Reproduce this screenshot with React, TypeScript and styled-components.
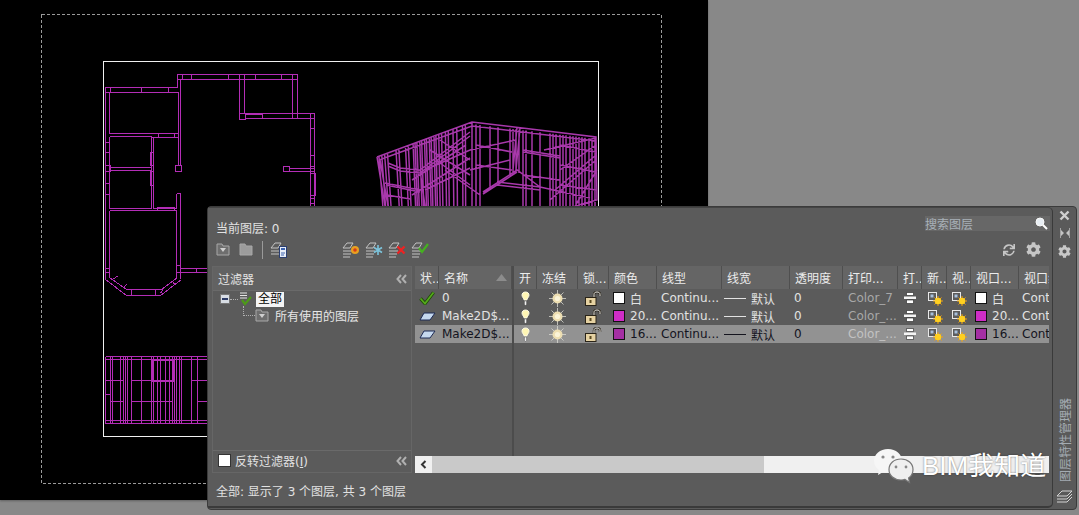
import React from "react";
import styled, { createGlobalStyle } from "styled-components";
import { FaCog, FaSync } from "react-icons/fa";

const GlobalStyle = createGlobalStyle`
  html, body {
    margin: 0;
    padding: 0;
    width: 1079px;
    height: 515px;
    overflow: hidden;
    background: #888888;
  }
  * {
    box-sizing: border-box;
  }
`;

const Desktop = styled.div`
  position: relative;
  width: 1079px;
  height: 515px;
  background: #888888;
  font-family: "DejaVu Sans", "Noto Sans CJK SC", sans-serif;
  font-size: 12px;
  color: #e2e2e2;
`;

const Viewport = styled.div`
  width: 708px;
  height: 500px;
  background: #000;
  box-shadow: 0 1px 2px rgba(0, 0, 0, 0.3);

  svg {
    display: block;
  }
`;

const Palette = styled.div`
  position: absolute;
  left: 207px;
  top: 206px;
  width: 870px;
  height: 304px;
  display: flex;
  background: #5a5a5a;
  border: 1px solid #3b3b3b;
  border-radius: 4px;
`;

const Main = styled.div`
  width: 845px;
  height: 301px;
  display: flex;
  flex-direction: column;
  padding: 0 2px 0 4px;
  background: #5b5b5b;
  border-top: 1px solid #444;
  border-right: 1px solid #3a3a3a;
  border-bottom: 2px solid #3a3a3a;
  border-radius: 0 5px 5px 0;
`;

const TitleRow = styled.div`
  height: 29px;
  display: flex;
  align-items: flex-end;
  justify-content: space-between;
  padding: 0 0 1px 4px;
`;

const SearchBox = styled.div`
  width: 125px;
  height: 15px;
  margin-bottom: 5px;
  display: flex;
  align-items: center;
  justify-content: space-between;
  background: #676767;
  color: #a9b1b8;
  padding-right: 2px;
`;

const ToolRow = styled.div`
  height: 29px;
  display: flex;
  align-items: center;
  padding: 0 0 4px 4px;
`;

const ToolGap = styled.div<{ $width: number }>`
  width: ${(p) => p.$width}px;
  flex: none;
`;

const ToolDivider = styled.div`
  width: 1px;
  height: 18px;
  background: #9a9a9a;
  margin: 0 7px 0 9px;
`;

const ToolRight = styled.div`
  margin-left: auto;
  margin-right: 9px;
  display: flex;
  align-items: center;
  gap: 11px;
  color: #c6c6c6;
`;

const Body = styled.div`
  height: 207px;
  display: flex;
  gap: 3px;
`;

const FilterPane = styled.div`
  width: 200px;
  display: flex;
  flex-direction: column;
  border: 1px solid #666;
`;

const FilterHeader = styled.div`
  height: 24px;
  flex: none;
  display: flex;
  align-items: center;
  justify-content: space-between;
  padding: 0 4px 0 5px;
  background: #626262;
  border-bottom: 1px solid #6a6a6a;
`;

const FilterTree = styled.div`
  flex: 1;
  padding: 0 0 0 7px;
`;

const TreeRow = styled.div<{ $indent?: number }>`
  height: 16px;
  display: flex;
  align-items: center;
  padding-left: ${(p) => p.$indent ?? 0}px;
`;

const TreeToggle = styled.div`
  width: 10px;
  height: 10px;
  background: #d8dde4;
  border: 1px solid #777;
  display: flex;
  align-items: center;
  justify-content: center;

  &::after {
    content: "";
    width: 6px;
    height: 2px;
    background: #2c3a66;
  }
`;

const TreeDots = styled.div`
  width: 8px;
  border-top: 1px dotted #b0b0b0;
`;

const TreeElbow = styled.div`
  width: 12px;
  height: 10px;
  margin-top: -8px;
  border-left: 1px dotted #b0b0b0;
  border-bottom: 1px dotted #b0b0b0;
`;

const TreeSelected = styled.span`
  background: #f4f4f4;
  color: #000;
  padding: 0 2px;
  line-height: 15px;
  margin-left: 3px;
`;

const TreeLabel = styled.span`
  margin-left: 6px;
  color: #e6e6e6;
`;

const FilterFooter = styled.div`
  height: 22px;
  flex: none;
  display: flex;
  align-items: center;
  justify-content: space-between;
  padding: 0 4px 2px 5px;
  border-top: 1px solid #6a6a6a;
`;

const InvertLabel = styled.label`
  display: flex;
  align-items: center;
  gap: 4px;

  u {
    text-underline-offset: 1px;
  }
`;

const CheckBox = styled.span`
  width: 13px;
  height: 13px;
  background: #fff;
  border: 1px solid #333;
`;

const LayerPane = styled.div`
  flex: 1;
  min-width: 0;
  position: relative;
  display: flex;
  flex-direction: column;
`;

const LayerTables = styled.div`
  height: 190px;
  display: flex;
  padding-right: 1px;
`;

const FrozenTable = styled.div`
  width: 99px;
  flex: none;
  border-right: 2px solid #4c4c4c;
`;

const ScrollTable = styled.div`
  flex: 1;
  min-width: 0;
  overflow: hidden;
`;

const HeaderRow = styled.div`
  height: 23px;
  display: flex;
  background: #656565;
  color: #ececec;
`;

const HeaderCell = styled.div<{ $width: number }>`
  width: ${(p) => p.$width}px;
  flex: none;
  display: flex;
  align-items: center;
  justify-content: space-between;
  padding: 0 4px 0 5px;
  overflow: hidden;
  white-space: nowrap;
  border-right: 1px solid #4f4f4f;
`;

const Row = styled.div<{ $selected?: boolean }>`
  height: 18px;
  display: flex;
  background: ${(p) => (p.$selected ? "#929292" : "transparent")};
  color: ${(p) => (p.$selected ? "#14141e" : "#e2e2e2")};
`;

const Cell = styled.div<{ $width: number; $center?: boolean; $tint?: string; $pad?: number }>`
  width: ${(p) => p.$width}px;
  flex: none;
  display: flex;
  align-items: center;
  justify-content: ${(p) => (p.$center ? "center" : "flex-start")};
  padding-left: ${(p) => (p.$center ? 0 : (p.$pad ?? 4))}px;
  overflow: hidden;
  white-space: nowrap;
  color: ${(p) => p.$tint ?? "inherit"};
`;

const Swatch = styled.span<{ $color: string }>`
  width: 12px;
  height: 12px;
  flex: none;
  background: ${(p) => p.$color};
  border: 1px solid #111;
  margin-right: 5px;
`;

const LineSample = styled.span`
  width: 22px;
  height: 1px;
  flex: none;
  background: currentColor;
  margin: 0 5px 0 -2px;
`;

const ScrollBar = styled.div`
  height: 17px;
  margin-right: 1px;
  display: flex;
  background: #f0f0f0;
`;

const ScrollArrow = styled.div`
  width: 17px;
  display: flex;
  align-items: center;
  justify-content: center;
  color: #333;
`;

const ScrollThumb = styled.div`
  width: 332px;
  background: #c9c9c9;
`;

const StatusRow = styled.div`
  flex: 1;
  display: flex;
  align-items: center;
  padding: 2px 0 0 4px;
`;

const SideStrip = styled.div`
  flex: 1;
  display: flex;
  flex-direction: column;
  align-items: center;
  padding: 3px 0 5px;
  color: #c8c8c8;
`;

const SideButtons = styled.div`
  display: flex;
  flex-direction: column;
  align-items: center;
  gap: 7px;
`;

const SideTitle = styled.div`
  margin-top: auto;
  margin-bottom: 8px;
  writing-mode: vertical-rl;
  text-orientation: sideways;
  transform: rotate(180deg);
  color: #a4abb2;
  font-family: "Noto Sans CJK SC", sans-serif;
  line-height: 14px;
`;

const Watermark = styled.div`
  position: absolute;
  left: 873px;
  top: 448px;
  display: flex;
  align-items: center;
  gap: 7px;
  color: #fff;
  font-family: "Liberation Sans", "Noto Sans CJK SC", sans-serif;
  font-size: 26px;
  line-height: 36px;
  text-shadow: 0 0 2px rgba(0, 0, 0, 0.55);
`;

const FolderIcon = ({ filled }: { filled?: boolean }) => (
  <svg width="14" height="13" viewBox="0 0 14 13">
    <path d="M1 3V1h5l1 2h6v9H1z" fill={filled ? "#9c9c9c" : "#6e6e6e"} stroke="#a8a8a8" />
    {!filled && <path d="M4 5h6L7 9z" fill="#d0d0d0" />}
  </svg>
);

const LayerStack = ({ badge }: { badge?: React.ReactNode }) => (
  <svg width="18" height="17" viewBox="0 0 18 17">
    <g fill="none" stroke="#c4c4c4">
      <path d="M1 7h7l3-5H5z" fill="#5b5b5b" />
      <path d="M1 10h9M1 13h8M1 16h7" />
    </g>
    {badge}
  </svg>
);

const OrangeDot = (
  <g>
    <circle cx="13" cy="9" r="4" fill="#e8a020" />
    <circle cx="13" cy="9" r="1.8" fill="#d83a18" />
  </g>
);
const BlueDot = (
  <path d="M13 4v10M9 6.5l8 5M9 11.5l8-5" stroke="#7cc4dc" strokeWidth="1.6" />
);
const RedCross = <path d="M9.5 5.5l7 7M16.5 5.5l-7 7" stroke="#ee2222" strokeWidth="2.4" />;
const GreenTick = <path d="M8 7l3 4 6-8" fill="none" stroke="#45b020" strokeWidth="2.2" />;

const StateIcon = () => (
  <svg width="17" height="17" viewBox="0 0 17 17">
    <g fill="none" stroke="#c4c4c4">
      <path d="M1 7h7l3-5H5z" />
      <path d="M1 10h8M1 13h8" />
    </g>
    <rect x="9.5" y="5.5" width="7" height="11" fill="#e8eef8" stroke="#2b3f70" />
    <rect x="11" y="7" width="4" height="2" fill="#3e64b0" />
    <path d="M11 12h4M11 14h3" stroke="#3e64b0" />
  </svg>
);

const DoubleChevron = () => (
  <svg width="11" height="10" viewBox="0 0 11 10">
    <path d="M5 1L1.5 5 5 9M10 1L6.5 5 10 9" fill="none" stroke="#b0b0b0" strokeWidth="2" />
  </svg>
);

const Magnifier = () => (
  <svg width="13" height="13" viewBox="0 0 13 13">
    <circle cx="5" cy="5" r="4" fill="#e8eef4" stroke="#f8f8f8" />
    <path d="M8 8l4 4" stroke="#fff" strokeWidth="2" />
  </svg>
);

const Tick = () => (
  <svg width="16" height="14" viewBox="0 0 16 14">
    <path d="M1.5 7.5L6 12.5 14.5 1.5" fill="none" stroke="#1e4a08" strokeWidth="3.4" />
    <path d="M1.5 7.5L6 12.5 14.5 1.5" fill="none" stroke="#55a81c" strokeWidth="1.8" />
  </svg>
);

const LayerPlate = () => (
  <svg width="17" height="9" viewBox="0 0 17 9">
    <path d="M1 8l4-7h11l-5 7z" fill="#c6d9ef" stroke="#1d2a55" />
  </svg>
);

const Bulb = () => (
  <svg width="9" height="15" viewBox="0 0 9 15">
    <path d="M4.5 1C2 1 1 2.6 1 4.2 1 6.2 3 7.4 3.2 9h2.6C6 7.4 8 6.2 8 4.2 8 2.6 7 1 4.5 1z" fill="#fff6b4" stroke="#fffde8" />
    <path d="M3.4 10h2.2v3.4l-1.1 1-1.1-1z" fill="#f2f2f2" stroke="#333" strokeWidth="0.4" />
  </svg>
);

const Sun = () => (
  <svg width="17" height="17" viewBox="0 0 17 17">
    <path d="M8.5 0v17M0 8.5h17M2.5 2.5l12 12M14.5 2.5l-12 12" stroke="#d8d8d0" strokeWidth="0.8" />
    <circle cx="8.5" cy="8.5" r="5" fill="#eedfb2" />
    <circle cx="8.5" cy="8.5" r="2.6" fill="#fbf4d8" />
  </svg>
);

const OpenLock = () => (
  <svg width="17" height="15" viewBox="0 0 17 15">
    <path d="M9 7V3.5C9 1.8 10.2 1 12 1s3 .8 3 2.5V5" fill="none" stroke="#2a2418" strokeWidth="2.4" />
    <path d="M9 7V3.5C9 1.8 10.2 1 12 1s3 .8 3 2.5V5" fill="none" stroke="#f2f2f2" strokeWidth="1" />
    <rect x="0.5" y="6.5" width="10.5" height="8" fill="#e6d2a2" stroke="#2a2418" />
    <rect x="4.5" y="9" width="2" height="3" fill="#5a4a20" />
  </svg>
);

const Printer = () => (
  <svg width="12" height="12" viewBox="0 0 12 12">
    <path d="M2.500 .5h7v3h-7z" fill="#fff" stroke="#222" strokeWidth="0.6" />
    <rect x="0" y="4.500" width="12" height="2.500" fill="#f4f4f4" />
    <path d="M2.500 8h7v3.500h-7z" fill="#fff" stroke="#222" strokeWidth="0.6" />
  </svg>
);

const NewFreeze = () => (
  <svg width="16" height="15" viewBox="0 0 16 15">
    <rect x="1.5" y="1.5" width="8" height="8" fill="#5b5b5b" stroke="#e8e8e8" />
    <rect x="3.5" y="3.5" width="3" height="3" fill="#a8c0dc" />
    <path d="M11 5v10M6 10h10M7.5 6.5l7 7M14.5 6.5l-7 7" stroke="#f0a010" />
    <circle cx="11" cy="10" r="3.2" fill="#ffd020" />
  </svg>
);

const CloseIcon = () => (
  <svg width="11" height="11" viewBox="0 0 11 11">
    <path d="M1.5 1.5l8 8M9.5 1.5l-8 8" stroke="#d0d0d0" strokeWidth="2.4" />
  </svg>
);

const PinIcon = () => (
  <svg width="10" height="10" viewBox="0 0 10 10">
    <path d="M0 0v10M10 0v10" stroke="#c4c4c4" strokeWidth="1.4" />
    <path d="M1 2l3 3-3 3zM9 2L6 5l3 3z" fill="#c4c4c4" />
  </svg>
);

const SheetsIcon = () => (
  <svg width="17" height="14" viewBox="0 0 17 14">
    <g fill="none" stroke="#d4d4d4">
      <path d="M1 6l5-5h10l-5 5z" />
      <path d="M1 9h10l5-5M1 12h10l5-5" />
    </g>
  </svg>
);

const WeChatLogo = () => (
  <svg width="42" height="36" viewBox="0 0 42 36">
    <path d="M15 1C7 1 1 6 1 13c0 4 2 7 5 9l-1 5 5-3c1.500.4 3 .6 5 .6 8 0 14-5 14-11.600S23 1 15 1z" fill="#f6f6f6" />
    <path d="M28 11c-7 0-12 4.500-12 10.500S21 32 28 32c1.500 0 2.800-.2 4-.6l4.500 3-.9-4.500C38.500 28 40 25 40 21.500 40 15.500 35 11 28 11z" fill="#efefef" stroke="#777" strokeWidth="1.2" />
    <circle cx="10" cy="9" r="1.600" fill="#888" />
    <circle cx="20" cy="9" r="1.600" fill="#888" />
    <circle cx="23" cy="19" r="1.400" fill="#888" />
    <circle cx="33" cy="19" r="1.400" fill="#888" />
  </svg>
);

// rectangle outline for the plan walls
const box = (x1: number, y1: number, x2: number, y2: number) =>
  `M${x1} ${y1}H${x2}V${y2}H${x1}Z`;
const h = (x1: number, x2: number, y: number) => `M${x1} ${y}H${x2}`;
const v = (x: number, y1: number, y2: number) => `M${x} ${y1}V${y2}`;

const planPath = [
  // upper left room
  h(105, 177, 87), h(105, 178, 92), v(177, 74, 87), v(105, 87, 278), v(109, 92, 133),
  v(141, 87, 92), v(168, 87, 92), box(105, 87, 110, 92),
  v(178, 92, 165), v(180, 79, 165), box(175, 165, 181, 171),
  h(109, 178, 133), h(109, 151, 136), box(158, 133, 174, 137), h(151, 178, 137),
  // middle rooms
  v(109, 136, 208), v(151, 136, 208), v(153, 137, 208), box(150, 152, 153, 165), box(150, 171, 153, 185),
  h(109, 151, 167), h(109, 151, 170), box(105, 165, 110, 171),
  h(105, 109, 142), h(105, 109, 152), h(105, 109, 183), h(105, 109, 194),
  h(109, 151, 208), h(109, 176, 210), h(153, 176, 208), box(157, 207, 174, 210),
  v(176, 193, 208), h(176, 180, 193), v(180, 193, 278), v(176, 210, 277),
  // bay window
  v(109, 210, 277), "M105 279L126 295H160L181 279", "M109 277L126 289H161L177 277",
  "M112 279L118 275M122 288L126 284", v(131, 289, 295), v(155, 289, 295),
  "M163 288L160 293M172 281L175 285",
  box(176, 265, 180, 272), h(180, 207, 268), h(180, 207, 272), v(196, 268, 272),
  h(105, 109, 268), h(105, 109, 272),
  // top and right wing
  h(177, 297, 74), h(177, 297, 79), box(177, 74, 182, 79),
  v(191, 74, 79), v(228, 74, 79), v(239, 74, 79), v(244, 74, 79), v(255, 74, 79), v(281, 74, 79),
  v(239, 79, 113), v(244, 79, 113), box(239, 113, 245, 119), box(245, 114, 262, 118),
  h(245, 314, 113), h(245, 314, 118), v(292, 74, 118), v(297, 74, 118),
  v(310, 113, 207), v(314, 113, 207), h(310, 314, 128), h(310, 314, 155), h(310, 314, 166),
  box(310, 173, 315, 195), h(310, 314, 198), h(310, 314, 203),
  box(283, 166, 289, 171), h(289, 314, 168), h(289, 314, 171),
  // lower elevation
  h(105, 207, 356), h(105, 207, 359), h(105, 207, 420), h(105, 207, 423),
  ...[105, 110, 112, 120, 123, 125, 127, 131, 141, 151, 153, 157, 160, 165, 169, 172, 174, 176, 179, 181, 191, 197].map(
    (x) => v(x, 356, 423)
  ),
  h(105, 123, 380), h(131, 172, 380), h(191, 207, 380), h(110, 123, 401), h(131, 172, 401), h(197, 207, 401),
  h(105, 110, 394), box(151, 359, 174, 381), box(152, 360, 173, 380),
].join("");

const lerp = (a: number, b: number, t: number) => a + (b - a) * t;

// verticals along the left wall of the 3D view
const leftWall = [0.02, 0.05, 0.08, 0.11, 0.2, 0.23, 0.3, 0.33, 0.38, 0.4, 0.42, 0.45, 0.47, 0.5, 0.52, 0.55, 0.57, 0.6, 0.62, 0.65, 0.68, 0.72, 0.75, 0.8, 0.84, 0.9, 0.93, 1]
  .map((t) => {
    const x = lerp(377, 472, t);
    const y = lerp(157, 122, t);
    return `M${x} ${y}L${x + 4 * (1 - t)} 206`;
  })
  .join("");

// verticals along the back wall, stopping at the floor opening
const floorEnd = (x: number) => (x > 486 && x < 522 ? 172 + Math.abs(x - 517) * 0.55 : 206);

const backWall = [476, 480, 490, 498, 510, 513, 516, 519, 523, 526, 532, 540, 550, 553, 556, 560, 563, 566, 570, 573, 576, 579, 582, 585, 589, 592, 595]
  .map((x) => `M${x} ${lerp(124, 139, (x - 472) / 124)}V${floorEnd(x)}`)
  .join("");

const modelPath = [
  leftWall,
  backWall,
  "M377 157L472 122L596 137L597 200L575 206",
  "M379 160L472 126L596 141",
  "M377 157L385 206M380 160L388 206",
  "M388 163L400 168L420 170L470 132",
  "M388 166L400 171L420 173L470 136",
  "M385 183L420 190M387 195L410 199M386 185L420 192",
  "M420 170L425 206M412 180L466 145M412 195L470 158M425 170L470 150M425 190L470 168",
  "M430 150L470 175M440 140L470 160M436 160L470 185M445 170L480 195",
  "M470 150L516 140M470 170L510 160M476 145L512 152M476 165L512 170",
  "M483 192L517 170L540 187M483 194L517 172M497 182L540 187L590 198M497 185L540 190",
  "M517 127L513 170M520 128L516 170M523 150L560 156M523 175L560 180M523 152L560 158",
  "M544 150L596 138M560 170L596 145M555 190L596 155M575 206L597 170",
  "M560 145L596 152M560 165L596 172M560 185L596 190M550 200L596 160",
].join("");

const DrawingSheet = () => (
  <svg width="708" height="500" viewBox="0 0 708 500">
    <g transform="translate(0.5 0.5)" fill="none" shapeRendering="crispEdges">
      <rect x="41" y="14" width="620" height="469" stroke="#9a9a9a" strokeDasharray="3 2" />
      <rect x="103" y="61" width="495" height="375" stroke="#f0f0f0" />
      <path d={planPath} stroke="#b32db6" />
    </g>
    <path d={modelPath} fill="none" stroke="#a838ab" strokeWidth="1.5" />
  </svg>
);

const frozenColumns = [
  { label: "状..", width: 24 },
  { label: "名称", width: 73 },
];

const columns = [
  { label: "开", width: 23 },
  { label: "冻结", width: 41 },
  { label: "锁...", width: 31 },
  { label: "颜色", width: 48 },
  { label: "线型", width: 65 },
  { label: "线宽", width: 68 },
  { label: "透明度", width: 53 },
  { label: "打印...", width: 55 },
  { label: "打..", width: 24 },
  { label: "新..", width: 25 },
  { label: "视..", width: 24 },
  { label: "视口...", width: 48 },
  { label: "视口线型", width: 31 },
];

const layers = [
  { name: "0", current: true, color: "#ffffff", colorName: "白", plot: "Color_7" },
  { name: "Make2D$...", color: "#cf2dc6", colorName: "20...", plot: "Color_..." },
  { name: "Make2D$...", color: "#a42fa3", colorName: "16...", plot: "Color_...", selected: true },
];

const App = () => {
  return (
    <Desktop>
      <GlobalStyle />
      <Viewport>
        <DrawingSheet />
      </Viewport>
      <Palette>
        <Main>
          <TitleRow>
            <span>当前图层: 0</span>
            <SearchBox>
              搜索图层
              <Magnifier />
            </SearchBox>
          </TitleRow>
          <ToolRow>
            <FolderIcon />
            <ToolGap $width={9} />
            <FolderIcon filled />
            <ToolDivider />
            <StateIcon />
            <ToolGap $width={55} />
            <LayerStack badge={OrangeDot} />
            <ToolGap $width={5} />
            <LayerStack badge={BlueDot} />
            <ToolGap $width={5} />
            <LayerStack badge={RedCross} />
            <ToolGap $width={5} />
            <LayerStack badge={GreenTick} />
            <ToolRight>
              <FaSync size={12} />
              <FaCog size={15} />
            </ToolRight>
          </ToolRow>
          <Body>
            <FilterPane>
              <FilterHeader>
                过滤器
                <DoubleChevron />
              </FilterHeader>
              <FilterTree>
                <TreeRow>
                  <TreeToggle />
                  <TreeDots />
                  <svg width="15" height="16" viewBox="0 0 15 16">
                    <path d="M2 2h7M2 4.500h7M2 7h7" stroke="#e6e6e6" />
                    <path d="M4 9l3 4 6-7" fill="none" stroke="#4d9a18" strokeWidth="2.2" />
                  </svg>
                  <TreeSelected>全部</TreeSelected>
                </TreeRow>
                <TreeRow $indent={23}>
                  <TreeElbow />
                  <FolderIcon />
                  <TreeLabel>所有使用的图层</TreeLabel>
                </TreeRow>
              </FilterTree>
              <FilterFooter>
                <InvertLabel>
                  <CheckBox />
                  <span>
                    反转过滤器(<u>I</u>)
                  </span>
                </InvertLabel>
                <DoubleChevron />
              </FilterFooter>
            </FilterPane>
            <LayerPane>
              <LayerTables>
                <FrozenTable>
                  <HeaderRow>
                    <HeaderCell $width={frozenColumns[0].width}>{frozenColumns[0].label}</HeaderCell>
                    <HeaderCell $width={frozenColumns[1].width}>
                      {frozenColumns[1].label}
                      <svg width="11" height="7" viewBox="0 0 11 7">
                        <path d="M0 7L5.500 0 11 7z" fill="#8c8c8c" />
                      </svg>
                    </HeaderCell>
                  </HeaderRow>
                  {layers.map((layer, i) => (
                    <Row key={i} $selected={layer.selected}>
                      <Cell $width={24} $center>
                        {layer.current ? <Tick /> : <LayerPlate />}
                      </Cell>
                      <Cell $width={73} $pad={3}>
                        {layer.name}
                      </Cell>
                    </Row>
                  ))}
                </FrozenTable>
                <ScrollTable>
                  <HeaderRow>
                    {columns.map((col) => (
                      <HeaderCell key={col.label} $width={col.width}>
                        {col.label}
                      </HeaderCell>
                    ))}
                  </HeaderRow>
                  {layers.map((layer, i) => (
                    <Row key={i} $selected={layer.selected}>
                      <Cell $width={23} $center>
                        <Bulb />
                      </Cell>
                      <Cell $width={41} $center>
                        <Sun />
                      </Cell>
                      <Cell $width={31} $center>
                        <OpenLock />
                      </Cell>
                      <Cell $width={48}>
                        <Swatch $color={layer.color} />
                        {layer.colorName}
                      </Cell>
                      <Cell $width={65}>Continu...</Cell>
                      <Cell $width={68}>
                        <LineSample />
                        默认
                      </Cell>
                      <Cell $width={53}>0</Cell>
                      <Cell $width={55} $pad={5} $tint={layer.selected ? "#c2c2c2" : "#a8a8a8"}>
                        {layer.plot}
                      </Cell>
                      <Cell $width={24} $center>
                        <Printer />
                      </Cell>
                      <Cell $width={25} $center>
                        <NewFreeze />
                      </Cell>
                      <Cell $width={24} $center>
                        <NewFreeze />
                      </Cell>
                      <Cell $width={48}>
                        <Swatch $color={layer.color} />
                        {layer.colorName}
                      </Cell>
                      <Cell $width={31} $pad={3}>
                        Continuous
                      </Cell>
                    </Row>
                  ))}
                </ScrollTable>
              </LayerTables>
              <ScrollBar>
                <ScrollArrow>
                  <svg width="7" height="9" viewBox="0 0 7 9">
                    <path d="M5.500 1L2 4.500 5.500 8" fill="none" stroke="#333" strokeWidth="2" />
                  </svg>
                </ScrollArrow>
                <ScrollThumb />
              </ScrollBar>
            </LayerPane>
          </Body>
          <StatusRow>全部: 显示了 3 个图层, 共 3 个图层</StatusRow>
        </Main>
        <SideStrip>
          <SideButtons>
            <CloseIcon />
            <PinIcon />
            <FaCog size={13} />
          </SideButtons>
          <SideTitle>图层特性管理器</SideTitle>
          <SheetsIcon />
        </SideStrip>
      </Palette>
      <Watermark>
        <WeChatLogo />
        <span>BIM我知道</span>
      </Watermark>
    </Desktop>
  );
};

export default App;
